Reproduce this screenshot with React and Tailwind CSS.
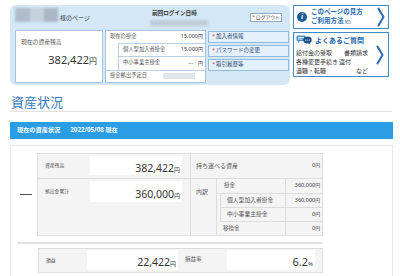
const Chevron = ({ className }) => (
  <svg viewBox="0 0 8 20" className={className}>
    <path d="M1.5 1.5 L6.5 10 L1.5 18.5" fill="none" stroke="#2a6db5" strokeWidth="2" strokeLinecap="round" strokeLinejoin="round" />
  </svg>
);

const Bubbles = () => (
  <svg viewBox="0 0 16 10" className="w-[16px] h-[10px]">
    <path d="M0.5 1.5 Q0.5 0.5 1.5 0.5 H8.5 Q9.5 0.5 9.5 1.5 V5 Q9.5 6 8.5 6 H4 L2 8 V6 H1.5 Q0.5 6 0.5 5 Z" fill="#4a8fd4" />
    <rect x="2" y="2" width="6" height="0.8" fill="#fff" />
    <rect x="2" y="3.6" width="4.5" height="0.8" fill="#fff" />
    <ellipse cx="11.5" cy="5" rx="4.2" ry="3.4" fill="#1d4f8d" />
    <path d="M13 7.5 L15 9.5 L12 8.2 Z" fill="#1d4f8d" />
    <circle cx="9.8" cy="5" r="0.6" fill="#fff" />
    <circle cx="11.5" cy="5" r="0.6" fill="#fff" />
    <circle cx="13.2" cy="5" r="0.6" fill="#fff" />
  </svg>
);

const Yen = ({ v, big = "text-[10.5px]", small = "text-[6px]" }) => (
  <span className="whitespace-nowrap text-[#333]">
    <span className={big}>{v}</span>
    <span className={small}>円</span>
  </span>
);

export default function App() {
  return (
    <div className="w-[400px] h-[276px] overflow-hidden bg-white font-['Noto_Sans','Noto_Sans_CJK_JP',sans-serif] text-[#444] leading-none">
      {/* top area */}
      <div className="flex pt-[5px] pl-[10px] gap-[3px]">
        {/* panel */}
        <div className="w-[280px] h-[80px] bg-[#d3e7f7] rounded-[6px] flex flex-col pl-[5px] pr-[1px]">
          <div className="h-[24.5px] flex items-start">
            <div className="w-[135px] flex items-start">
              <div className="flex mt-[3px] h-[14px] blur-[0.8px]">
                <div className="w-[15px] bg-[#aebccb]" />
                <div className="w-[14px] bg-[#c4d0dc]" />
                <div className="w-[14px] bg-[#a9b7c6]" />
              </div>
              <span className="text-[6px] ml-[2px] mt-[10px] text-[#333]">様のページ</span>
            </div>
            <div className="w-[60px] flex flex-col items-start">
              <span className="text-[5.6px] font-bold mt-[6px] ml-[2px] text-[#333]">前回ログイン日時</span>
              <div className="w-[58px] h-[6px] mt-[3px] bg-[#bfcedb] blur-[0.8px]" />
            </div>
            <div className="ml-auto mr-[7px] mt-[8px] w-[32px] h-[9px] bg-white border border-[#8aa9c6] flex items-center justify-center text-[4.8px] text-[#333]">
              <span className="text-[#e0443a] mr-[1px]">*</span>ログアウト
            </div>
          </div>
          <div className="flex gap-[2px]">
            {/* current balance */}
            <div className="w-[88px] h-[53px] bg-white border border-[#a3c3de] flex flex-col px-[5px] pt-[9px]">
              <span className="text-[5.8px] text-[#555]">現在の資産残高</span>
              <div className="mt-[5px] text-right">
                <Yen v="382,422" big="text-[11px]" small="text-[8px]" />
              </div>
            </div>
            {/* contributions */}
            <div className="w-[101px] h-[53px] bg-white border border-[#a3c3de] flex flex-col text-[5.3px] text-[#555]">
              <div className="h-[12px] flex items-center justify-between pl-[4px] pr-[2px]">
                <span>現在の掛金</span>
                <Yen v="15,000" big="text-[5.5px]" small="text-[5px]" />
              </div>
              <div className="ml-[12px] border-l border-t border-[#b8d0e5] flex flex-col">
                <div className="h-[13px] border-b border-[#b8d0e5] flex items-center justify-between pl-[4px] pr-[2px]">
                  <span>個人型加入者掛金</span>
                  <Yen v="15,000" big="text-[5.5px]" small="text-[5px]" />
                </div>
                <div className="h-[13px] flex items-center justify-between pl-[4px] pr-[2px]">
                  <span>中小事業主掛金</span>
                  <span className="text-[#333] text-[5px]">---　円</span>
                </div>
              </div>
              <div className="h-[11px] border-t border-[#b8d0e5] flex items-center pl-[4px]">
                <span>掛金拠出予定日</span>
                <div className="ml-[16px] w-[32px] h-[6px] bg-[#e0e5ea] blur-[0.6px]" />
              </div>
            </div>
            {/* links */}
            <div className="w-[81px] flex flex-col gap-[2px] pt-[1.5px]">
              {["加入者情報", "パスワードの変更", "取引履歴等"].map((t) => (
                <div key={t} className="h-[12px] bg-[#e4f0fb] border border-[#93b9db] flex items-center pl-[3px] text-[5.5px] text-[#2d4f78]">
                  <span className="text-[#e0443a] mr-[1px]">*</span>
                  {t}
                </div>
              ))}
            </div>
          </div>
        </div>
        {/* right column */}
        <div className="w-[96px] flex flex-col gap-[3px]">
          <div className="h-[24px] bg-white border-[1.5px] border-[#4588c6] flex items-center pl-[3px]">
            <div className="w-[10px] h-[10px] rounded-full bg-[#1d5a9b] flex items-center justify-center text-white text-[8px] font-bold italic font-['Liberation_Serif',serif]">
              i
            </div>
            <div className="ml-[4px] flex flex-col gap-[2.5px] text-[6.5px] font-bold text-[#1f65b0]">
              <span>このページの見方</span>
              <span className="flex items-center">
                ご利用方法
                <svg viewBox="0 0 6 4" className="w-[6px] h-[4px] ml-[1.5px]">
                  <rect x="0.4" y="0.4" width="4" height="2.6" fill="none" stroke="#7d9cbc" strokeWidth="0.6" />
                  <rect x="1.6" y="1.2" width="4" height="2.4" fill="#fff" stroke="#7d9cbc" strokeWidth="0.6" />
                </svg>
              </span>
            </div>
            <Chevron className="ml-auto mr-[3px] w-[8px] h-[20px]" />
          </div>
          <div className="h-[45px] bg-white border-[1.5px] border-[#4588c6] flex items-center pl-[2px]">
            <div className="flex flex-col">
              <div className="flex items-center">
                <Bubbles />
                <span className="ml-[3px] text-[7px] font-bold text-[#1f65b0]">よくあるご質問</span>
              </div>
              <div className="mt-[5px] w-[72px] flex flex-col gap-[2.6px] text-[6px] text-[#333]">
                <div className="flex justify-between"><span>給付金の受取</span><span>書類請求</span></div>
                <div className="flex gap-[1px]"><span>各種変更手続き</span><span>還付</span></div>
                <div className="flex justify-between"><span>退職・転職</span><span>など</span></div>
              </div>
            </div>
            <Chevron className="ml-auto mr-[4px] w-[8px] h-[20px]" />
          </div>
        </div>
      </div>

      {/* heading */}
      <div className="mt-[9px] h-[17px] pl-[11px] text-[13px] leading-[17px] text-[#3a7cc0]">資産状況</div>
      <div className="ml-[10px] w-[382px] h-px bg-[#e2e2e2]" />

      {/* blue bar */}
      <div className="mt-[10px] ml-[10px] w-[383px] h-[17px] bg-[#2b9de6] flex items-center pl-[7px] text-white text-[6.2px] font-bold">
        <span>現在の資産状況</span>
        <span className="ml-[10px]">2022/05/08 現在</span>
      </div>

      {/* content */}
      <div className="mt-[6px] ml-[10px] w-[383px] h-[160px] border border-[#e8e8e8] flex flex-col pt-[7px]">
        <div className="flex">
          <div className="w-[26px] flex items-center">
            <div className="ml-[9px] w-[12px] h-[1.5px] bg-[#555]" />
          </div>
          <div className="w-[286px] border border-[#dcdcdc] bg-[#f4f4f4] flex">
            {/* left part */}
            <div className="w-[153px] border-r border-[#dcdcdc] flex flex-col">
              <div className="h-[25px] border-b border-[#dcdcdc] flex">
                <div className="w-[52px] pl-[7px] pt-[9px] text-[4.8px] text-[#555]">資産残高</div>
                <div className="mt-[2px] w-[92px] h-[19px] bg-white flex items-center justify-end pr-[2px]">
                  <Yen v="382,422" />
                </div>
              </div>
              <div className="h-[56px] flex">
                <div className="w-[52px] pl-[7px] pt-[10px] text-[4.8px] text-[#555]">拠出金累計</div>
                <div className="mt-[2px] w-[92px] h-[21px] bg-white flex items-center justify-end pr-[2px]">
                  <Yen v="360,000" />
                </div>
              </div>
            </div>
            {/* right part */}
            <div className="flex-1 flex flex-col text-[5.5px] text-[#555]">
              <div className="h-[25px] border-b border-[#dcdcdc] flex items-center justify-between pl-[5px] pr-[2px]">
                <span className="text-[6px]">持ち運べる資産</span>
                <Yen v="0" big="text-[5.5px]" small="text-[4.8px]" />
              </div>
              <div className="h-[56px] flex">
                <div className="w-[26px] border-r border-[#dcdcdc] pl-[5px] pt-[10px] text-[6px]">内訳</div>
                <div className="flex-1 flex flex-col">
                  <div className="h-[15px] border-b border-[#dcdcdc] flex">
                    <div className="flex-1 pl-[7px] flex items-center">掛金</div>
                    <div className="w-[37px] border-l border-[#dcdcdc] flex items-center justify-end pr-[2px]">
                      <Yen v="360,000" big="text-[5.5px]" small="text-[4.8px]" />
                    </div>
                  </div>
                  <div className="flex">
                    <div className="w-[4px] border-r border-[#dcdcdc]" />
                    <div className="flex-1 flex flex-col text-[5.8px]">
                      <div className="h-[14px] border-b border-[#dcdcdc] flex">
                        <div className="flex-1 pl-[6px] flex items-center">個人型加入者掛金</div>
                        <div className="w-[37px] border-l border-[#dcdcdc] flex items-center justify-end pr-[2px]">
                          <Yen v="360,000" big="text-[5.5px]" small="text-[4.8px]" />
                        </div>
                      </div>
                      <div className="h-[14px] border-b border-[#dcdcdc] flex">
                        <div className="flex-1 pl-[6px] flex items-center">中小事業主掛金</div>
                        <div className="w-[37px] border-l border-[#dcdcdc] flex items-center justify-end pr-[2px]">
                          <Yen v="0" big="text-[5.5px]" small="text-[4.8px]" />
                        </div>
                      </div>
                    </div>
                  </div>
                  <div className="flex-1 flex">
                    <div className="flex-1 pl-[6px] flex items-center">移換金</div>
                    <div className="w-[37px] border-l border-[#dcdcdc] flex items-center justify-end pr-[2px]">
                      <Yen v="0" big="text-[5.5px]" small="text-[4.8px]" />
                    </div>
                  </div>
                </div>
              </div>
            </div>
          </div>
        </div>
        <div className="mt-[6px] ml-[6px] w-[306px] h-[1.5px] bg-[#e2e2e2]" />
        <div className="mt-[4px] ml-[27px] w-[285px] h-[25px] border border-[#dcdcdc] bg-[#f4f4f4] flex items-center">
          <div className="w-[48px] pl-[7px] text-[4.8px] text-[#555]">損益</div>
          <div className="w-[91px] h-[20px] bg-white flex items-center justify-end pr-[2px]">
            <Yen v="22,422" />
          </div>
          <div className="w-[49px] pl-[7px] text-[5.5px] text-[#555]">損益率</div>
          <div className="w-[88px] h-[20px] bg-white flex items-center justify-end pr-[2px]">
            <span className="text-[#333]">
              <span className="text-[11px]">6.2</span>
              <span className="text-[6px]">%</span>
            </span>
          </div>
        </div>
      </div>
    </div>
  );
}
